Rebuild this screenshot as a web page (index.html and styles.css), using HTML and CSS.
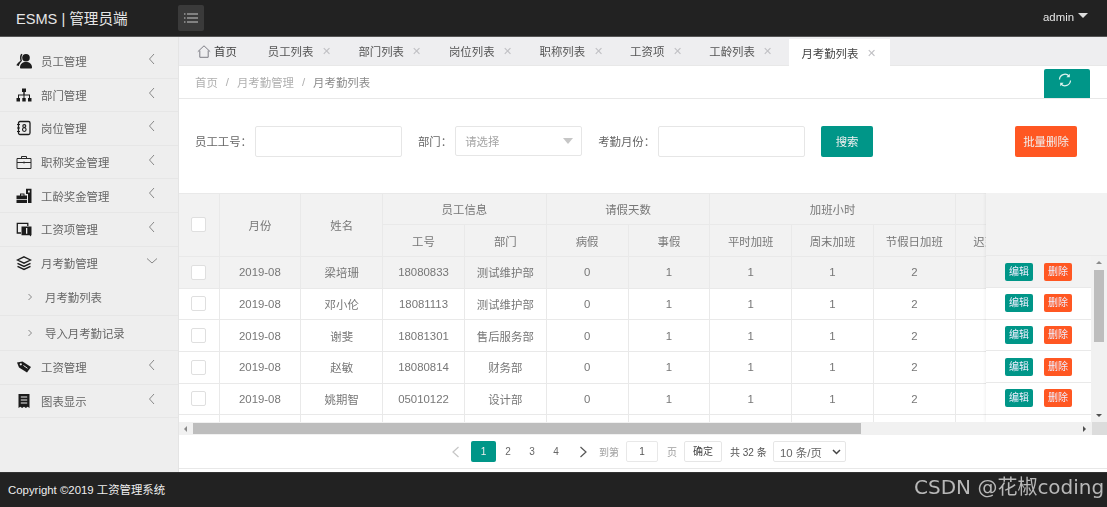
FILE: index.html
```html
<!DOCTYPE html>
<html lang="zh">
<head>
<meta charset="utf-8">
<title>ESMS</title>
<link rel="stylesheet" href="styles.css">
</head>
<body>
<header class="topbar">
  <div class="brand">ESMS | 管理员端</div>
  <button class="menu-toggle" aria-label="menu">
    <svg width="14" height="10" viewBox="0 0 14 10"><path d="M0 1h1.500M3 1h11M0 5h1.500M3 5h11M0 9h1.500M3 9h11" stroke="#c8c8c8" stroke-width="1.200" fill="none"/></svg>
  </button>
  <div class="user">admin<span class="caret"></span></div>
</header>
<div class="main">
  <aside class="sidebar">
    <div class="nav-item"><svg class="nav-icon" viewBox="0 0 16 16"><circle cx="10" cy="4.800" r="3.800" fill="#1c1c1c"/><path d="M4 14.500c0-3.500 2.500-5.500 6-5.500s6 2 6 5.500c0 .6-.5 1-1 1H5c-.5 0-1-.4-1-1z" fill="#1c1c1c"/><path d="M5.200 .8C3.900 2.500 3.700 5 4.500 7.800 2.800 9 1.300 10.500 .3 12.300L2.800 13C3.500 10.500 4.800 9 6 8 5.200 5.500 5.300 3 6.500 1.500z" fill="#1c1c1c"/></svg><span>员工管理</span><svg class="chev" viewBox="0 0 8 12"><path d="M6 1 1.500 6 6 11" /></svg></div>
    <div class="nav-item"><svg class="nav-icon" viewBox="0 0 16 16"><path d="M6 1.500h4v3.500H8.700v2.500H14V11h1.500v3.500h-3.500V11h1V8.500H8.500V11h1.200v3.500H6.300V11h1.200V8.500H3V11h1v3.500H.5V11H2V7.500h5.300V5H6z" fill="#1c1c1c"/></svg><span>部门管理</span><svg class="chev" viewBox="0 0 8 12"><path d="M6 1 1.500 6 6 11" /></svg></div>
    <div class="nav-item"><svg class="nav-icon" viewBox="0 0 16 16"><rect x="2.500" y="1.500" width="11.500" height="13" rx="1.500" fill="none" stroke="#1c1c1c" stroke-width="1.300"/><path d="M1 4.500h3M1 8h3M1 11.500h3" stroke="#1c1c1c" stroke-width="1.200"/><ellipse cx="8.300" cy="6" rx="1.500" ry="1.400" fill="none" stroke="#1c1c1c" stroke-width="1.100"/><ellipse cx="8.300" cy="9.600" rx="1.800" ry="1.900" fill="none" stroke="#1c1c1c" stroke-width="1.100"/></svg><span>岗位管理</span><svg class="chev" viewBox="0 0 8 12"><path d="M6 1 1.500 6 6 11" /></svg></div>
    <div class="nav-item"><svg class="nav-icon" viewBox="0 0 16 16"><path d="M1 4.500h14v10H1zM5.500 4.500V2.500h5v2M1 8.500h14M8 7.500v2" fill="none" stroke="#2a2a2a" stroke-width="1"/></svg><span>职称奖金管理</span><svg class="chev" viewBox="0 0 8 12"><path d="M6 1 1.500 6 6 11" /></svg></div>
    <div class="nav-item"><svg class="nav-icon" viewBox="0 0 16 16"><path d="M10 .8h5.500V15H12V6h-2zM12 2.500V4.500h1.800V2.500z" fill="#1c1c1c" fill-rule="evenodd"/><path d="M.5 7.500h3.500V5.500h4.500v2H11V15H.5zM5 6.500v1h2.500v-1zM.5 11v.8H11V11z" fill="#1c1c1c" fill-rule="evenodd"/></svg><span>工龄奖金管理</span><svg class="chev" viewBox="0 0 8 12"><path d="M6 1 1.500 6 6 11" /></svg></div>
    <div class="nav-item"><svg class="nav-icon" viewBox="0 0 16 16"><path d="M5 12H1.300V2.300h10.500V5" fill="none" stroke="#1c1c1c" stroke-width="1.300"/><path d="M5.500 5.500h10v8.800h-.5v1.200l-1.500-1.200H5.500zM10 7v5.700h1.300V7z" fill="#1c1c1c" fill-rule="evenodd"/></svg><span>工资项管理</span><svg class="chev" viewBox="0 0 8 12"><path d="M6 1 1.500 6 6 11" /></svg></div>
    <div class="nav-item open"><svg class="nav-icon" viewBox="0 0 16 16"><path d="M8 1.800 14.500 5 8 8.200 1.500 5z" fill="none" stroke="#1c1c1c" stroke-width="1.300"/><path d="M1.500 8.300 8 11.500l6.500-3.200M1.500 11.300 8 14.500l6.500-3.200" fill="none" stroke="#1c1c1c" stroke-width="1.400"/></svg><span>月考勤管理</span><svg class="chev down" viewBox="0 0 12 8"><path d="M1 1.500 6 6l5-4.500" /></svg></div>
    <div class="sub-item"><svg class="sub-chev" viewBox="0 0 6 8"><path d="M1.500 1 4.500 4 1.500 7"/></svg><span>月考勤列表</span></div>
    <div class="sub-item"><svg class="sub-chev" viewBox="0 0 6 8"><path d="M1.500 1 4.500 4 1.500 7"/></svg><span>导入月考勤记录</span></div>
    <div class="nav-item"><svg class="nav-icon" viewBox="0 0 16 16"><path d="M1 3.500 6.500 2.500 15 8l-4 5.500L3 8.500z" fill="#1c1c1c"/><circle cx="4.800" cy="5.300" r="1.100" fill="#eee"/><path d="M7.500 6.500l4 2.800" stroke="#eee" stroke-width="1"/></svg><span>工资管理</span><svg class="chev" viewBox="0 0 8 12"><path d="M6 1 1.500 6 6 11" /></svg></div>
    <div class="nav-item"><svg class="nav-icon" viewBox="0 0 16 16"><path d="M2.500 1h11v14l-1.800-1.200L9.900 15 8 13.800 6.100 15l-1.800-1.200L2.500 15z" fill="#1c1c1c"/><path d="M4.800 4h6.400M4.800 7h6.400M4.800 10h6.400" stroke="#eee" stroke-width="1.100"/></svg><span>图表显示</span><svg class="chev" viewBox="0 0 8 12"><path d="M6 1 1.500 6 6 11" /></svg></div>
  </aside>
  <main class="content">
    <nav class="tabs">
      <div class="tab home"><svg width="14" height="13" viewBox="0 0 14 13"><path d="M.8 6.700 7 .8l6.200 5.900M2.800 5.500V12.300h8.400V5.500" fill="none" stroke="#7d7d85" stroke-width="1"/></svg><span>首页</span></div>
      <div class="tab"><span>员工列表</span><i class="x">✕</i></div>
      <div class="tab"><span>部门列表</span><i class="x">✕</i></div>
      <div class="tab"><span>岗位列表</span><i class="x">✕</i></div>
      <div class="tab"><span>职称列表</span><i class="x">✕</i></div>
      <div class="tab"><span>工资项</span><i class="x">✕</i></div>
      <div class="tab"><span>工龄列表</span><i class="x">✕</i></div>
      <div class="tab active"><span>月考勤列表</span><i class="x">✕</i></div>
    </nav>
    <div class="crumbs">
      <span>首页</span><em>/</em><span>月考勤管理</span><em>/</em><span class="last">月考勤列表</span>
      <button class="refresh" aria-label="refresh"><svg width="14" height="14" viewBox="0 0 14 14"><path d="M1.500 6.500A5.500 5.500 0 0 1 11 3M12.500 7.500A5.500 5.500 0 0 1 3 11" fill="none" stroke="#dff3ef" stroke-width="1.200"/><path d="M11.800 .8v3.400H8.400zM2.200 13.200V9.800h3.400z" fill="#dff3ef"/></svg></button>
    </div>
    <form class="search">
      <label>员工工号：</label><div class="field f-id"></div>
      <label class="l-dept">部门：</label><div class="field select"><span>请选择</span><i class="sel-caret"></i></div>
      <label class="l-month">考勤月份：</label><div class="field f-month"></div>
      <button type="button" class="btn teal">搜索</button>
      <button type="button" class="btn orange">批量删除</button>
    </form>
    <section class="grid-wrap">
      <div class="table-clip">
        <table class="data">
          <colgroup><col class="c0"><col class="c1"><col class="c1"><col class="c1"><col class="c1"><col class="c1"><col class="c1"><col class="c1"><col class="c1"><col class="c1"><col class="c1"></colgroup>
          <thead>
            <tr><th rowspan="2"><i class="check"></i></th><th rowspan="2">月份</th><th rowspan="2">姓名</th><th colspan="2">员工信息</th><th colspan="2">请假天数</th><th colspan="3">加班小时</th><th></th></tr>
            <tr><th>工号</th><th>部门</th><th>病假</th><th>事假</th><th>平时加班</th><th>周末加班</th><th>节假日加班</th><th>迟到次数</th></tr>
          </thead>
          <tbody>
            <tr class="hover"><td><i class="check"></i></td><td>2019-08</td><td>梁培珊</td><td>18080833</td><td>测试维护部</td><td>0</td><td>1</td><td>1</td><td>1</td><td>2</td><td></td></tr>
            <tr><td><i class="check"></i></td><td>2019-08</td><td>邓小伦</td><td>18081113</td><td>测试维护部</td><td>0</td><td>1</td><td>1</td><td>1</td><td>2</td><td></td></tr>
            <tr><td><i class="check"></i></td><td>2019-08</td><td>谢斐</td><td>18081301</td><td>售后服务部</td><td>0</td><td>1</td><td>1</td><td>1</td><td>2</td><td></td></tr>
            <tr><td><i class="check"></i></td><td>2019-08</td><td>赵敏</td><td>18080814</td><td>财务部</td><td>0</td><td>1</td><td>1</td><td>1</td><td>2</td><td></td></tr>
            <tr><td><i class="check"></i></td><td>2019-08</td><td>姚期智</td><td>05010122</td><td>设计部</td><td>0</td><td>1</td><td>1</td><td>1</td><td>2</td><td></td></tr>
            <tr><td></td><td></td><td></td><td></td><td></td><td></td><td></td><td></td><td></td><td></td><td></td></tr>
          </tbody>
        </table>
        <div class="fixed-right">
          <div class="fixed-head"></div>
          <div class="fixed-row hover"><span class="mini teal">编辑</span><span class="mini orange">删除</span></div>
          <div class="fixed-row"><span class="mini teal">编辑</span><span class="mini orange">删除</span></div>
          <div class="fixed-row"><span class="mini teal">编辑</span><span class="mini orange">删除</span></div>
          <div class="fixed-row"><span class="mini teal">编辑</span><span class="mini orange">删除</span></div>
          <div class="fixed-row"><span class="mini teal">编辑</span><span class="mini orange">删除</span></div>
        </div>
        <div class="v-head"></div>
        <div class="v-scroll"><i class="arrow up"></i><div class="v-thumb"></div><i class="arrow dn"></i></div>
      </div>
      <div class="h-scroll"><i class="arrow lf"></i><div class="h-track"><div class="h-thumb"></div></div><i class="arrow rt"></i><div class="corner"></div></div>
    </section>
    <div class="pager">
      <svg class="pg-arrow" width="9" height="12" viewBox="0 0 9 12"><path d="M7.500 1 2 6l5.500 5" fill="none" stroke="#c6c6c6" stroke-width="1.200"/></svg>
      <span class="pg cur">1</span><span class="pg">2</span><span class="pg">3</span><span class="pg">4</span>
      <svg class="pg-arrow next" width="9" height="12" viewBox="0 0 9 12"><path d="M1.500 1 7 6l-5.500 5" fill="none" stroke="#555" stroke-width="1.200"/></svg>
      <span class="pg-label to">到第</span><span class="pg-input">1</span><span class="pg-label">页</span><span class="pg-ok">确定</span><span class="pg-total">共 32 条</span>
      <span class="pg-size">10 条/页<svg width="9" height="6" viewBox="0 0 9 6"><path d="M1 1l3.500 3.500L8 1" fill="none" stroke="#444" stroke-width="1.500"/></svg></span>
    </div>
  </main>
</div>
<footer class="footer"><span>Copyright ©2019 工资管理系统</span></footer>
<div class="watermark">CSDN @花椒coding</div>
</body>
</html>
```
FILE: styles.css
```css
* { box-sizing: border-box; }
html, body { margin: 0; height: 507px; overflow: hidden; }
body {
  width: 1107px;
  display: flex;
  flex-direction: column;
  font: 11.4px "Liberation Sans", "Noto Sans CJK SC", sans-serif;
  color: #666;
  background: #fff;
  position: relative;
  filter: blur(.35px);
}
button { font: inherit; border: 0; padding: 0; }

.topbar {
  height: 37px;
  flex: none;
  background: #222;
  border-bottom: 1px solid #555;
  display: flex;
  align-items: center;
  color: #e6e6e6;
}
.brand { width: 178px; padding-left: 16px; font-size: 14.600px; margin-top: -2px; }
.menu-toggle {
  width: 26px; height: 26px;
  background: #3a3a3a;
  border-radius: 2px;
  display: flex; align-items: center; justify-content: center;
}
.user { margin-left: auto; margin-right: 19px; display: flex; align-items: center; margin-top: -3px; }
.caret { margin-left: 4px; margin-top: -3px; border: 5px solid transparent; border-top-color: #ddd; border-bottom: 0; }

.main { flex: none; display: flex; height: 435px; }
.sidebar { width: 179px; flex: none; background: #eee; border-right: 1px solid #e4e4e4; padding-top: 8px; }
.nav-item {
  height: 33.600px;
  display: flex;
  align-items: center;
  padding-left: 16px;
  border-bottom: 1px solid #e6e6e6;
  color: #666;
  position: relative;
}
.nav-item span { margin-left: 9px; }
.nav-icon { width: 16px; height: 16px; flex: none; }
.chev { position: absolute; left: 148px; top: 8px; width: 8px; height: 12px; fill: none; stroke: #888; stroke-width: 1; }
.chev.down { left: 146px; top: 10px; width: 12px; height: 8px; }
.sub-item {
  height: 35.400px;
  display: flex;
  align-items: center;
  padding-left: 27px;
  border-bottom: 1px solid #e6e6e6;
  color: #666;
}
.sub-item span { margin-left: 12px; }
.sub-chev { width: 6px; height: 8px; fill: none; stroke: #888; stroke-width: 1; }
.nav-item.open { border-bottom: 0; }

.content { flex: 1; min-width: 0; display: flex; flex-direction: column; }
.tabs {
  height: 29px; flex: none;
  background: #eeeef0;
  display: flex;
  padding-left: 18px;
  color: #555;
  border-bottom: 1px solid #e8e8e8;
}
.tab { display: flex; align-items: center; padding: 0 13.500px; }
.tab.home { gap: 3px; padding: 0 17.500px 0 0; color: #444; }
.tab .x { font-style: normal; font-size: 11px; width: 10px; text-align: center; color: #c0c0c4; margin-left: 8px; }
.tab.active {
  background: #fff;
  height: 28px;
  margin: 2px 0 0 3px;
  padding: 0 14px 0 12px;
  color: #444;
}

.crumbs {
  height: 33px; flex: none;
  display: flex;
  align-items: center;
  padding-left: 16px;
  color: #b0b0b0;
  border-bottom: 1px solid #e8e8e8;
  padding-bottom: 1px;
}
.crumbs em { font-style: normal; margin: 0 8px; }
.crumbs .last { color: #8a8a8a; }
.refresh {
  margin-left: auto; margin-right: 17px;
  width: 46px; height: 29px;
  align-self: flex-end;
  margin-bottom: -1px;
  background: #009688;
  border-radius: 2px 2px 0 0;
  display: flex; align-items: flex-start; justify-content: center;
  padding: 4px 4px 0 0;
}

.search {
  height: 93.500px; flex: none;
  display: flex;
  align-items: center;
  padding: 0 30px 9.500px 16px;
  color: #666;
}
.field { height: 31px; background: #fff; border: 1px solid #e6e6e6; border-radius: 2px; }
.f-id { width: 147px; margin-left: 3px; }
.l-dept { margin-left: 16px; }
.select {
  width: 127px; margin-left: 3px;
  height: 30px; margin-top: -1px;
  display: flex; align-items: center; justify-content: space-between;
  padding: 0 9px;
  color: #a5a5a5;
}
.sel-caret { border: 5px solid transparent; border-top: 6px solid #c6c6c6; border-bottom: 0; margin-right: -1px; }
.l-month { margin-left: 16px; }
.f-month { width: 147px; margin-left: 3px; }
.btn { height: 31px; color: #f0f0f0; border-radius: 2px; }
.teal { background: #009688; }
.orange { background: #ff5722; }
.btn.teal { width: 52px; margin-left: 16px; }
.btn.orange { width: 62px; margin-left: auto; }

.grid-wrap { height: 242.500px; flex: none; }
.table-clip { height: 229.500px; position: relative; overflow: hidden; }
.data { border-collapse: collapse; table-layout: fixed; width: 858px; }
.c0 { width: 40px; }
.c1 { width: 81.800px; }
.data th, .data td {
  border: 1px solid #e9e9e9;
  text-align: center;
  font-weight: normal;
  padding: 0;
  color: #777;
  white-space: nowrap;
  overflow: hidden;
}
.data th { background: #f2f2f2; height: 31.700px; }
.data td { height: 31.700px; }
.data .hover td { background: #f2f2f2; }
.data th:first-child, .data td:first-child { border-left: 0; }
.check { display: inline-block; width: 15px; height: 15px; background: #fff; border: 1px solid #dfdfdf; border-radius: 2px; vertical-align: middle; }
.fixed-right {
  position: absolute; top: 0; left: 807px; width: 105px;
  background: #fff;
  box-shadow: -1px 0 3px rgba(0,0,0,.06);
  height: 100%;
}
.fixed-head { height: 63.800px; background: #f2f2f2; border-bottom: 1px solid #e9e9e9; }
.fixed-row {
  height: 31.700px;
  border-bottom: 1px solid #e9e9e9;
  display: flex; align-items: center;
  padding-left: 19px;
  gap: 11px;
}
.fixed-row.hover { background: #f2f2f2; }
.mini {
  width: 28px; height: 18px;
  color: #eef; font-size: 10px; line-height: 18px; text-align: center;
  border-radius: 2px;
}
.v-head { position: absolute; top: 0; left: 912px; width: 16px; height: 63.800px; background: #f2f2f2; border-bottom: 1px solid #e9e9e9; }
.v-scroll { position: absolute; top: 63.800px; left: 912px; width: 16px; bottom: 0; background: #f1f1f1; }
.v-thumb { position: absolute; top: 14px; left: 3px; width: 10px; height: 72px; background: #bdbdbd; }
.arrow { position: absolute; width: 0; height: 0; border: 3px solid transparent; }
.arrow.up { top: 5px; left: 5px; border-bottom: 3px solid #8a8a8a; border-top: 0; }
.arrow.dn { bottom: 5px; left: 5px; border-top: 3px solid #505050; border-bottom: 0; }
.h-scroll { height: 13px; background: #f1f1f1; position: relative; }
.h-track { position: absolute; left: 14px; right: 30px; top: 1px; height: 11px; }
.h-thumb { width: 668px; height: 11px; background: #bdbdbd; }
.arrow.lf { left: 5px; top: 3.500px; border-right: 3px solid #8a8a8a; border-left: 0; }
.arrow.rt { right: 21px; top: 3.500px; border-left: 3px solid #505050; border-right: 0; }
.corner { position: absolute; right: 0; top: 0; width: 15px; height: 13px; background: #dcdcdc; }

.pager {
  height: 34px; flex: none;
  display: flex;
  align-items: center;
  padding-left: 264px;
  border-bottom: 1px solid #e8e8e8;
  color: #666;
  font-size: 10px;
}
.pg { width: 24px; height: 21px; line-height: 21px; text-align: center; border-radius: 2px; }
.pg.cur { background: #009688; color: #f0f0f0; margin-left: 11px; width: 25px; }
.pg-arrow { margin-left: 8px; }
.pg-arrow.next { margin-left: 11px; }
.pg-label { color: #a0a0a0; }
.pg-label.to { margin-left: 11px; }
.pg-input { width: 32px; height: 21px; line-height: 19px; border: 1px solid #e8e8e8; border-radius: 2px; text-align: center; margin: 0 9px 0 7px; color: #555; }
.pg-ok { width: 38px; height: 21px; line-height: 20px; border: 1px solid #e6e6e6; border-radius: 2px; text-align: center; margin-left: 7px; color: #444; }
.pg-total { width: 43px; margin-left: 8px; color: #555; white-space: nowrap; }
.pg-size {
  width: 73px; height: 21px;
  border: 1px solid #e6e6e6; border-radius: 2px;
  display: flex; align-items: center; justify-content: space-between;
  padding: 0 4px 0 6px; color: #666; font-size: 11.400px;
}

.footer {
  height: 35px; flex: none;
  background: #222;
  color: #eee;
  display: flex; align-items: center;
  padding: 0 0 2px 8px;
  border-top: 1px solid #333;
}
.watermark {
  position: absolute; left: 914px; top: 471px;
  font: 20px "DejaVu Sans", "Noto Sans CJK SC", sans-serif;
  color: #b8b8b8;
  white-space: nowrap;
}
```
